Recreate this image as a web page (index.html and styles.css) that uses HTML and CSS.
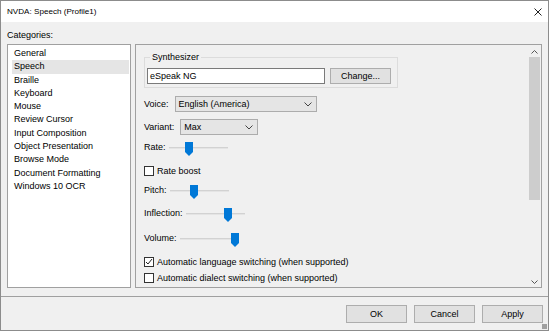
FILE: index.html
```html
<!DOCTYPE html>
<html lang="en">
<head>
  <meta charset="UTF-8" />
  <title>NVDA: Speech (Profile1)</title>
  <link rel="stylesheet" href="styles.css">
</head>
<body>

  <div class="window">
    <!-- Title bar -->
    <div class="titlebar">
      <span class="title">NVDA: Speech (Profile1)</span>
      <svg class="close" width="8" height="8" viewBox="0 0 8 8">
        <path d="M0.5 0.5 L7.5 7.5 M7.5 0.5 L0.5 7.5" stroke="#222" stroke-width="1" fill="none"/>
      </svg>
    </div>

    <div class="content">
      <div class="cat-label">Categories:</div>

      <div class="main">
        <ul class="categories">
          <li>General</li>
          <li class="selected">Speech</li>
          <li>Braille</li>
          <li>Keyboard</li>
          <li>Mouse</li>
          <li>Review Cursor</li>
          <li>Input Composition</li>
          <li>Object Presentation</li>
          <li>Browse Mode</li>
          <li>Document Formatting</li>
          <li>Windows 10 OCR</li>
        </ul>

        <div class="panel">
          <div class="panel-body">
            <fieldset class="group">
              <legend>Synthesizer</legend>
              <div class="synth-row">
                <div class="textbox">eSpeak NG</div>
                <div class="btn change-btn">Change...</div>
              </div>
            </fieldset>

            <div class="row combo-row voice">
              <span class="label">Voice:</span>
              <div class="combo voice-combo">
                <span>English (America)</span>
                <svg class="chev" width="8" height="5" viewBox="0 0 8 5"><path d="M0.5 0.5 L4 4 L7.5 0.5" stroke="#444" fill="none"/></svg>
              </div>
            </div>

            <div class="row combo-row variant">
              <span class="label">Variant:</span>
              <div class="combo variant-combo">
                <span>Max</span>
                <svg class="chev" width="8" height="5" viewBox="0 0 8 5"><path d="M0.5 0.5 L4 4 L7.5 0.5" stroke="#444" fill="none"/></svg>
              </div>
            </div>

            <div class="row slider-row rate">
              <span class="label">Rate:</span>
              <div class="slider">
                <div class="track"></div>
                <svg class="thumb" style="left: 16px" width="8" height="14" viewBox="0 0 8 14"><polygon points="0,0 8,0 8,10 4,14 0,10" fill="#0078d7"/></svg>
              </div>
            </div>

            <label class="row check-row boost">
              <span class="box"></span>
              <span>Rate boost</span>
            </label>

            <div class="row slider-row pitch">
              <span class="label">Pitch:</span>
              <div class="slider">
                <div class="track"></div>
                <svg class="thumb" style="left: 20px" width="8" height="14" viewBox="0 0 8 14"><polygon points="0,0 8,0 8,10 4,14 0,10" fill="#0078d7"/></svg>
              </div>
            </div>

            <div class="row slider-row inflection">
              <span class="label">Inflection:</span>
              <div class="slider">
                <div class="track"></div>
                <svg class="thumb" style="left: 38px" width="8" height="14" viewBox="0 0 8 14"><polygon points="0,0 8,0 8,10 4,14 0,10" fill="#0078d7"/></svg>
              </div>
            </div>

            <div class="row slider-row volume">
              <span class="label">Volume:</span>
              <div class="slider">
                <div class="track"></div>
                <svg class="thumb" style="left: 51px" width="8" height="14" viewBox="0 0 8 14"><polygon points="0,0 8,0 8,10 4,14 0,10" fill="#0078d7"/></svg>
              </div>
            </div>

            <label class="row check-row lang">
              <span class="box">
                <svg width="8" height="8" viewBox="0 0 8 8"><path d="M1 4 L3 6 L7 1" stroke="#222" stroke-width="1" fill="none"/></svg>
              </span>
              <span>Automatic language switching (when supported)</span>
            </label>

            <label class="row check-row dialect">
              <span class="box"></span>
              <span>Automatic dialect switching (when supported)</span>
            </label>
          </div>

          <div class="scrollbar">
            <svg class="arrow" width="7" height="4" viewBox="0 0 7 4"><path d="M0.5 3.5 L3.5 0.5 L6.5 3.5" stroke="#555" fill="none"/></svg>
            <div class="scroll-thumb"></div>
            <div class="scroll-space"></div>
            <svg class="arrow" width="7" height="4" viewBox="0 0 7 4"><path d="M0.5 0.5 L3.5 3.5 L6.5 0.5" stroke="#555" fill="none"/></svg>
          </div>
        </div>
      </div>
    </div>

    <div class="footer">
      <div class="btn">OK</div>
      <div class="btn">Cancel</div>
      <div class="btn">Apply</div>
      <span class="grip"></span>
    </div>
  </div>

</body>
</html>
```

FILE: styles.css
```css
:root {
  --face: #f0f0f0;
  --frame: #8c8c8c;
  --btn-bg: #e1e1e1;
  --btn-border: #adadad;
  --text: #000000;
}

* {
  margin: 0;
  padding: 0;
  box-sizing: border-box;
  font-family: 'Liberation Sans', Arial, sans-serif;
}

body {
  background: #ffffff;
  color: var(--text);
  font-size: 9px;
}

/* Window frame */
.window {
  width: 549px;
  height: 331px;
  border: 1px solid var(--frame);
  background: var(--face);
  display: flex;
  flex-direction: column;
  position: relative;
}

.titlebar {
  height: 21px;
  background: #ffffff;
  display: flex;
  align-items: center;
  justify-content: space-between;
  padding: 0 6px 0 6px;
  flex-shrink: 0;
}

.title {
  font-size: 8.1px;
}

.close {
  display: block;
}

/* Content */
.content {
  padding: 7px 6px 0 6px;
  flex: 1;
}

.cat-label {
  height: 12px;
  line-height: 12px;
  margin-bottom: 3px;
}

.main {
  display: flex;
  gap: 4px;
}

.categories {
  width: 124px;
  height: 244px;
  background: #ffffff;
  border: 1px solid #a0a0a0;
  list-style: none;
  padding: 2px 1px 0 4px;
}

.categories li {
  height: 13.3px;
  line-height: 13px;
  padding-left: 2px;
}

.categories li.selected {
  background: #e5e5e5;
}

/* Settings panel */
.panel {
  width: 407px;
  height: 244px;
  border: 1px solid #a0a0a0;
  display: flex;
  overflow: hidden;
}

.panel-body {
  flex: 1;
  padding: 6px 0 0 8px;
  display: flex;
  flex-direction: column;
}

.group {
  width: 254px;
  height: 37px;
  border: 1px solid #dcdcdc;
  padding: 5px 2px 0 2px;
}

.group legend {
  margin-left: 3px;
  padding: 0 2px;
  line-height: 12px;
}

.synth-row {
  display: flex;
  gap: 5px;
}

.textbox {
  width: 178px;
  height: 16px;
  line-height: 14px;
  background: #ffffff;
  border: 1px solid #7a7a7a;
  padding-left: 2px;
}

.btn {
  background: var(--btn-bg);
  border: 1px solid var(--btn-border);
  display: flex;
  align-items: center;
  justify-content: center;
}

.change-btn {
  width: 61px;
  height: 16px;
}

.row {
  display: flex;
  align-items: center;
}

.combo-row {
  height: 16px;
}

.combo-row.voice {
  margin-top: 8px;
}

.combo-row.variant {
  margin-top: 7px;
}

.combo {
  height: 16px;
  background: #e5e5e5;
  border: 1px solid #acacac;
  display: flex;
  align-items: center;
  justify-content: space-between;
  padding: 0 4px 0 3px;
}

.voice-combo {
  width: 142px;
  margin-left: 6px;
}

.variant-combo {
  width: 78px;
  margin-left: 6px;
}

/* Sliders */
.slider-row {
  height: 14px;
  align-items: flex-start;
}

.slider-row .label {
  line-height: 11px;
}

.slider-row.rate {
  margin-top: 7px;
}

.slider-row.pitch {
  margin-top: 8px;
}

.slider-row.inflection {
  margin-top: 9px;
}

.slider-row.volume {
  margin-top: 11px;
}

.slider {
  position: relative;
  width: 59px;
  height: 14px;
  margin-left: 3px;
}

.track {
  position: absolute;
  left: 0;
  right: 0;
  top: 5px;
  height: 2px;
  background: #e4e4e4;
  border-top: 1px solid #d2d2d2;
}

.thumb {
  position: absolute;
  top: 0;
}

/* Checkboxes */
.check-row {
  height: 12px;
  gap: 3px;
}

.box {
  width: 10px;
  height: 10px;
  border: 1px solid #333333;
  background: #ffffff;
  display: flex;
  align-items: center;
  justify-content: center;
}

.boost {
  margin-top: 9px;
}

.lang {
  margin-top: 9px;
}

.dialect {
  margin-top: 4px;
}

/* Scrollbar */
.scrollbar {
  width: 13px;
  display: flex;
  flex-direction: column;
  align-items: center;
  background: #f0f0f0;
  padding: 5px 0 3px 0;
}

.scroll-thumb {
  width: 11px;
  height: 143px;
  background: #cdcdcd;
  margin-top: 3px;
}

.scroll-space {
  flex: 1;
}

/* Footer */
.footer {
  height: 34px;
  border-top: 1px solid #a0a0a0;
  display: flex;
  justify-content: flex-end;
  align-items: flex-start;
  gap: 7px;
  padding: 8px 5px 0 0;
  flex-shrink: 0;
}

.footer .btn {
  width: 61px;
  height: 18px;
}

.grip {
  position: absolute;
  right: 1px;
  bottom: 1px;
  width: 5px;
  height: 5px;
  background:
    radial-gradient(circle, #a0a0a0 0.8px, transparent 1px) 0 0 / 2px 2px;
}
```
